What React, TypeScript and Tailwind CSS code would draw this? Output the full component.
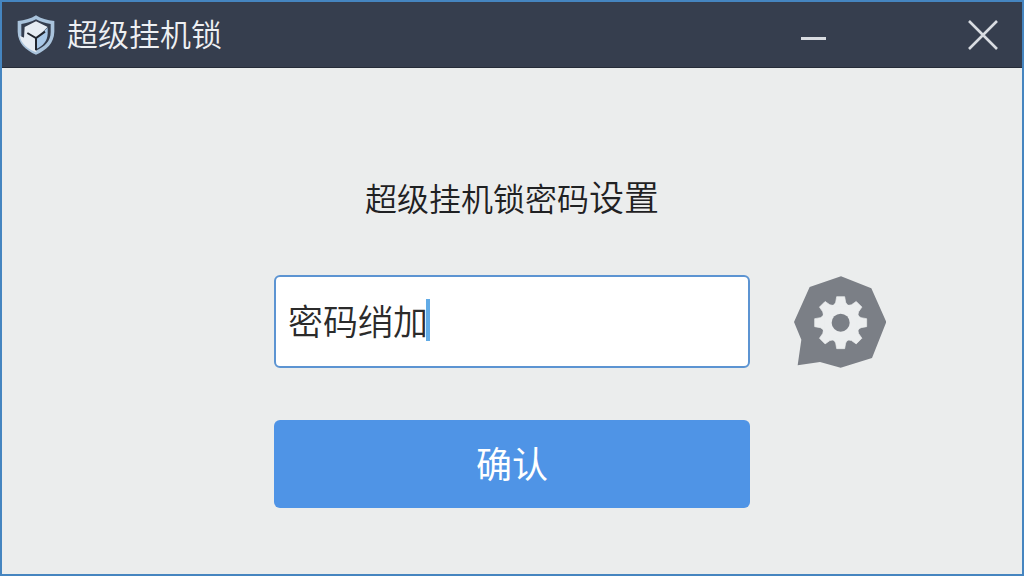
import React, { useState } from 'react';

const TOOTH_ANGLES = [0, 45, 90, 135, 180, 225, 270, 315];

const ShieldLogo: React.FC = () => (
  <svg viewBox="0 0 114 120" className="h-10 w-[38px] shrink-0" aria-hidden="true">
    <path d="M57 1 C42 11 24 16 2 18 V50 C3 85 26 105 57 119 C88 105 111 85 112 50 V18 C90 16 72 11 57 1Z" fill="#a9c3dc" />
    <path d="M57 13 C43 21 28 25 13 27 V66 L20 68 L24 88 L57 107 C83 95 101 79 101 52 V27 C86 25 71 21 57 13Z" fill="#343d4e" />
    <path d="M57 19 L92 36 L58 70 V112 C32 101 12 86 8 62 L21 68 L23 36Z" fill="#e6ecf3" />
    <path d="M58 68 L92 38 V55 C92 78 78 93 58 102Z" fill="#a8c8e8" />
    <path d="M31 54 L57 69 L84 50 M57 69 V106" fill="none" stroke="#20252e" strokeWidth="6" />
  </svg>
);

const GearBadge: React.FC = () => (
  <svg viewBox="0 0 276 276" className="h-[92px] w-[92px]" aria-hidden="true">
    <path d="M141 1 L232 37 L277 138 L234 246 L140 275 L78 258 L11 268 L22 191 L0 138 L47 33Z" fill="#7b7f86" />
    <circle cx="140" cy="140" r="58" fill="#eceeef" />
    {TOOTH_ANGLES.map((angle) => (
      <path key={angle} d="M118 90 L125 79 L128 62 H152 L155 79 L162 90Z" fill="#eceeef" stroke="#eceeef" strokeWidth="2" transform={`rotate(${angle} 140 140)`} />
    ))}
    <circle cx="140" cy="140" r="27" fill="#7b7f86" />
  </svg>
);

const App: React.FC = () => {
  const [password, setPassword] = useState('密码绡加');

  return (
    <div className="flex min-h-screen flex-col border-2 border-[#4585c0] bg-[#ebeded] font-['Noto_Sans_CJK_SC',sans-serif]">
      <header className="flex h-[66px] items-center border-b border-[#262c38] bg-[#363e4e] pl-[15px] pr-[21px] text-[#eef0f3]">
        <ShieldLogo />
        <h1 className="ml-3 flex-1 pb-1 text-[31px] leading-10 font-[350]">超级挂机锁</h1>
        <div className="flex items-center gap-[133px]">
          <button type="button" aria-label="最小化" className="flex h-10 w-9 items-center justify-center">
            <svg viewBox="0 0 26 30" className="h-[30px] w-[26px]" stroke="#d9dce1" strokeWidth="3">
              <path d="M0 18.5 H25" />
            </svg>
          </button>
          <button type="button" aria-label="关闭" className="flex h-10 w-9 items-center justify-center">
            <svg viewBox="0 0 30 30" className="h-[30px] w-[30px]" stroke="#d9dce1" strokeWidth="2.6">
              <path d="M1 1 L29 29 M29 1 L1 29" />
            </svg>
          </button>
        </div>
      </header>

      <main className="flex-1 px-4 pt-[104px] pb-16">
        <h2 className="text-center text-[32px] leading-[48px] text-[#1f2123] font-[350]">
          超级挂机锁密码<span className="text-[35px] leading-[48px]">设置</span>
        </h2>

        <form
          className="mt-[54px] grid grid-cols-[1fr_minmax(0,476px)_1fr] gap-y-[52px]"
          onSubmit={(e) => e.preventDefault()}
        >
          <div className="relative col-start-2">
            <input
              type="text"
              aria-label="密码"
              value={password}
              onChange={(e) => setPassword(e.target.value)}
              className="block h-[93px] w-full rounded-md border-2 border-[#5c94d2] bg-white px-3 pb-1 text-[35px] font-[350] text-[#2b2b2b] caret-transparent outline-none"
            />
            {/* thick caret sits right after the typed text */}
            <div className="pointer-events-none absolute inset-0 flex items-center overflow-hidden px-3.5 pb-1 text-[35px] font-[350]" aria-hidden="true">
              <span className="invisible whitespace-pre">{password}</span>
              <span className="-ml-0.5 h-[42px] w-1 shrink-0 bg-[#62abe6]" />
            </div>
          </div>
          <button type="button" aria-label="设置" className="ml-11 self-center justify-self-start">
            <GearBadge />
          </button>
          <button type="submit" className="col-start-2 h-[88px] rounded-md bg-[#4f94e6] pb-1 text-4xl text-white">
            确认
          </button>
        </form>
      </main>
    </div>
  );
};

export default App;
